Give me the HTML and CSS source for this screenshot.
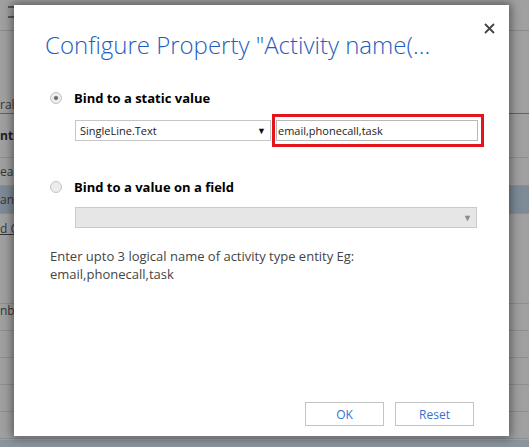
FILE: index.html
```html
<!DOCTYPE html>
<html>
<head>
<meta charset="utf-8">
<link rel="stylesheet" href="styles.css">
</head>
<body>
<div class="page">
  <div class="toolbar"><span class="menu-icon"></span></div>
  <div class="row r1"><span class="bgtext">ral</span></div>
  <div class="row r2"><span class="bgtext bold">ntr</span></div>
  <div class="row r3"><span class="bgtext">ead</span></div>
  <div class="row r4 sel"><span class="bgtext">anb</span></div>
  <div class="row r5"><span class="bgtext ul">d C</span></div>
  <div class="row r6"><span class="bgtext">nb</span></div>
  <div class="row r7"></div>
  <div class="row r7"></div>
  <div class="row r7"></div>
  <div class="row r7"></div>
  <div class="footer-strip"></div>
</div>
<div class="overlay"></div>
<div class="dialog">
  <button class="close" aria-label="Close">
    <svg width="11" height="11" viewBox="0 0 11 11"><path d="M1 1L10 10M10 1L1 10" stroke="#444" stroke-width="1.8" fill="none"/></svg>
  </button>
  <h1 class="title">Configure Property "Activity name(...</h1>
  <div class="option">
    <span class="radio checked"></span>
    <span class="label">Bind to a static value</span>
  </div>
  <div class="controls">
    <div class="select"><span>SingleLine.Text</span><span class="arrow">&#9660;</span></div>
    <div class="highlight"><div class="input">email,phonecall,task</div></div>
  </div>
  <div class="option second">
    <span class="radio"></span>
    <span class="label">Bind to a value on a field</span>
  </div>
  <div class="select disabled"><span></span><span class="arrow">&#9660;</span></div>
  <p class="help">Enter upto 3 logical name of activity type entity Eg:<br>email,phonecall,task</p>
  <div class="buttons">
    <button class="btn">OK</button>
    <button class="btn">Reset</button>
  </div>
</div>
</body>
</html>
```
FILE: styles.css
```css
html, body {
  margin: 0;
  padding: 0;
  width: 529px;
  height: 447px;
  overflow: hidden;
  font-family: "Open Sans", "Noto Sans", sans-serif;
}
.page {
  width: 529px;
  height: 447px;
  background: #fafafa;
  display: flex;
  flex-direction: column;
}
.toolbar {
  height: 31px;
  border-bottom: 1px solid #d8d8d8;
  box-sizing: border-box;
  padding: 6px 0 0 8px;
}
.menu-icon {
  display: block;
  width: 6px;
  height: 12px;
  border-top: 2px solid #888;
  border-bottom: 2px solid #888;
  box-sizing: border-box;
}
.row {
  box-sizing: border-box;
  border-bottom: 1px solid #dedede;
  display: flex;
  align-items: center;
}
.bgtext {
  font-size: 12px;
  line-height: 14px;
  color: #555;
  margin-left: 0;
}
.bold { font-weight: bold; color: #333; }
.ul { text-decoration: underline; }
.r1 { height: 83px; align-items: flex-end; padding-bottom: 1px; border-bottom: 1px solid #9a9a9a; }
.r2 { height: 44px; }
.r3 { height: 28px; }
.r4 { height: 28px; }
.r5 { height: 90px; align-items: flex-start; padding-top: 8px; }
.r6 { height: 27px; align-items: flex-start; padding-top: 0; }
.r7 { height: 27px; }
.sel { background: #c4d9ec; }
.footer-strip {
  flex: 1;
  background: #d8e8f6;
  margin-top: 1px;
}
.overlay {
  position: absolute;
  inset: 0;
  background: rgba(0, 0, 0, 0.36);
}
.dialog {
  position: absolute;
  left: 14px;
  top: 5px;
  width: 495px;
  height: 431px;
  box-sizing: border-box;
  background: #fff;
  box-shadow: 0 0 9px 2px rgba(0, 0, 0, 0.45);
  padding: 20px 20px 0 36px;
  display: flex;
  flex-direction: column;
}
.close {
  position: absolute;
  right: 14px;
  top: 18px;
  border: 0;
  background: none;
  padding: 0;
  width: 11px;
  height: 11px;
  display: flex;
}
.title {
  margin: 0 0 0 -5px;
  font-weight: 300;
  font-size: 24px;
  line-height: 40px;
  color: #1e5ebe;
  white-space: nowrap;
}
.option {
  display: flex;
  align-items: center;
  margin-top: 23px;
  height: 20px;
}
.option.second { margin-top: 30px; }
.radio {
  width: 12px;
  height: 12px;
  border-radius: 50%;
  border: 1px solid #c4c4c4;
  background: #ececec;
  box-sizing: border-box;
  position: relative;
  flex-shrink: 0;
}
.radio.checked::after {
  content: "";
  position: absolute;
  left: 3px;
  top: 3px;
  width: 4px;
  height: 4px;
  border-radius: 50%;
  background: #666;
}
.label {
  margin-left: 12px;
  font-size: 13px;
  font-weight: bold;
  color: #000;
}
.controls {
  display: flex;
  align-items: center;
  margin-top: 6px;
  margin-left: 25px;
}
.select {
  box-sizing: border-box;
  width: 196px;
  height: 21px;
  border: 1px solid #c6c6c6;
  display: flex;
  align-items: center;
  justify-content: space-between;
  padding: 0 4px 0 4px;
  font-size: 11px;
  color: #222;
  flex-shrink: 0;
}
.select .arrow {
  font-size: 9px;
  color: #111;
}
.highlight {
  margin-left: 1px;
  border: 3px solid #e2141c;
  padding: 3px 3px 3px 1px;
  width: 212px;
  box-sizing: border-box;
  flex-shrink: 0;
}
.input {
  box-sizing: border-box;
  height: 21px;
  border: 1px solid #b8b8b8;
  font-size: 11px;
  color: #222;
  display: flex;
  align-items: center;
  padding-left: 1px;
}
.select.disabled {
  width: 402px;
  margin-left: 25px;
  margin-top: 10px;
  background: #e6e6e6;
  border-color: #cacaca;
}
.select.disabled .arrow { color: #888; }
.help {
  margin: 19px 0 0 0;
  font-size: 13px;
  line-height: 18px;
  color: #444;
}
.buttons {
  margin-top: auto;
  margin-bottom: 10px;
  display: flex;
  justify-content: flex-end;
  gap: 11px;
  padding-right: 15px;
}
.btn {
  width: 79px;
  height: 24px;
  border: 1px solid #c4c4c4;
  background: #fff;
  font-family: "Open Sans", "Noto Sans", sans-serif;
  font-size: 12px;
  color: #3a6fd0;
  padding: 0;
}
```
